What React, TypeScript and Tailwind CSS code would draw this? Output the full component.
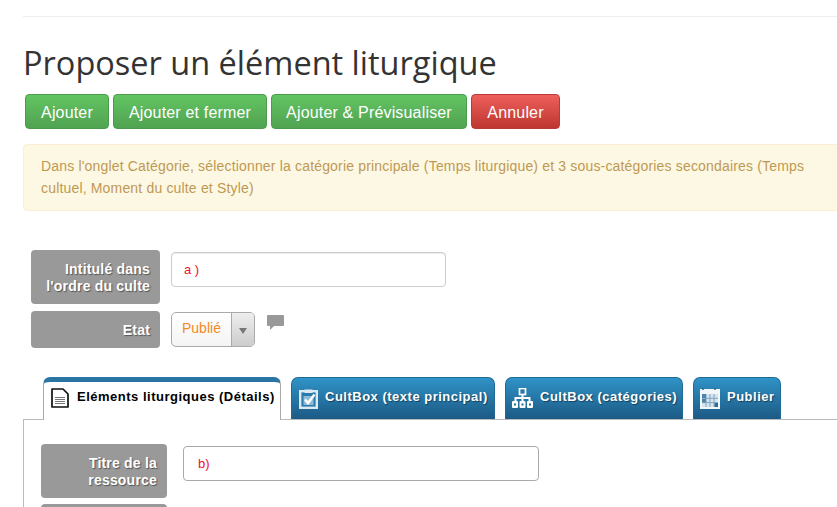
import type { ReactNode } from "react";

const arial = "font-['Liberation_Sans',Arial,sans-serif]";

function FormLabel({ children, className }: { children: ReactNode; className: string }) {
  return (
    <div
      className={`flex items-center justify-end rounded-[4px] bg-[#999999] pr-[10px] text-right text-[14px] leading-[17px] font-bold tracking-[0.2px] text-white [text-shadow:1px_1px_1px_#555] ${className}`}
    >
      <span className="pt-[1px]">{children}</span>
    </div>
  );
}

function DocIcon() {
  return (
    <svg width="18" height="20" viewBox="0 0 18 20" className="mt-[1px] shrink-0">
      <path d="M1 1h11l5 5v13H1z" fill="#fff" stroke="#111" strokeWidth="1.7" strokeLinejoin="round" />
      <path d="M4 9.5h10M4 11.5h10M4 13.5h10M4 15.5h10" stroke="#666" strokeWidth="0.9" />
    </svg>
  );
}

function ClipboardIcon() {
  return (
    <svg width="19" height="21" viewBox="0 0 19 21" className="shrink-0">
      <rect x="1.2" y="3.2" width="16.6" height="16.6" fill="#2a7bab" stroke="#dde9f1" strokeWidth="2.4" />
      <path d="M5.5 1.5h8v3.5h-8z" fill="#dde9f1" />
      <rect x="4.5" y="8" width="10" height="9" fill="#8fbbd6" />
      <path d="M6 11.5l3 3.5L15.5 6.5" fill="none" stroke="#fff" strokeWidth="2.4" />
    </svg>
  );
}

function TreeIcon() {
  return (
    <svg width="21" height="20" viewBox="0 0 21 20" className="shrink-0">
      <rect x="7.5" y="0.5" width="6" height="6" fill="#2a7bab" stroke="#fff" strokeWidth="1.7" />
      <path d="M10.5 6v8M3.5 14v-4h14v4" fill="none" stroke="#fff" strokeWidth="2" />
      <rect x="0" y="13" width="6" height="7" rx="1" fill="#fff" />
      <rect x="7.5" y="13" width="6" height="7" rx="1" fill="#fff" />
      <rect x="15" y="13" width="6" height="7" rx="1" fill="#fff" />
      <rect x="2" y="15.5" width="2" height="2" fill="#1f6795" />
      <rect x="9.5" y="15.5" width="2" height="2" fill="#1f6795" />
      <rect x="17" y="15.5" width="2" height="2" fill="#1f6795" />
    </svg>
  );
}

function CalendarIcon() {
  return (
    <svg width="20" height="21" viewBox="0 0 20 21" className="shrink-0">
      <rect x="0" y="1" width="20" height="20" fill="#f2f6f9" />
      <path d="M3 0v2M15 0v2" stroke="#1f5f8c" strokeWidth="1.4" />
      <rect x="2" y="6" width="16" height="13" fill="#d5e3ec" />
      <path d="M6 6v13M10 6v13M14 6v13M2 10.3h16M2 14.6h16" stroke="#7ea6c1" strokeWidth="1" />
      <rect x="2" y="6" width="4" height="4" fill="#4d86ad" />
      <rect x="2" y="10.8" width="4" height="3.6" fill="#4d86ad" />
      <rect x="14.5" y="15" width="3.5" height="4" fill="#2f6c99" />
    </svg>
  );
}

function BlueTab({ icon, label, className }: { icon: ReactNode; label: string; className: string }) {
  return (
    <div
      className={`flex h-[42px] items-start gap-[7px] rounded-t-[7px] border-t border-x border-[#206a96] bg-gradient-to-b from-[#3093c7] to-[#1c5a85] pt-[10px] text-[13px] leading-[18px] font-bold tracking-[0.5px] text-white [text-shadow:1px_1px_1px_#14405f] ${className}`}
    >
      {icon}
      <span className="whitespace-nowrap">{label}</span>
    </div>
  );
}

export default function App() {
  return (
    <div className={`h-[507px] w-[837px] overflow-hidden bg-white pl-[23px] ${arial}`}>
      <div className="mt-[16px] h-px w-[900px] bg-[#eeeeee]" />

      <h1 className="mt-[24px] h-[49px] font-['Open_Sans',sans-serif] text-[32.5px] leading-[44px] font-normal text-[#333333]">
        Proposer un élément liturgique
      </h1>

      <div className="mt-[4px] ml-[2px] flex gap-[4px] text-[16px] tracking-[0.17px] text-white [text-shadow:0_1px_1px_#3a6a3a]">
        <button className="h-[35px] w-[84px] rounded-[4px] border border-[#4a9c4c] bg-gradient-to-b from-[#62c462] to-[#51a351] pt-[2px]">
          Ajouter
        </button>
        <button className="h-[35px] w-[154px] rounded-[4px] border border-[#4a9c4c] bg-gradient-to-b from-[#62c462] to-[#51a351] pt-[2px]">
          Ajouter et fermer
        </button>
        <button className="h-[35px] w-[196px] rounded-[4px] border border-[#4a9c4c] bg-gradient-to-b from-[#62c462] to-[#51a351] pt-[2px]">
          Ajouter &amp; Prévisualiser
        </button>
        <button className="h-[35px] w-[89px] rounded-[4px] border border-[#b93a36] bg-gradient-to-b from-[#ee5f5b] to-[#bd362f] pt-[2px]">
          Annuler
        </button>
      </div>

      <div className="mt-[15px] h-[67px] w-[900px] rounded-[4px] border border-[#fbeed5] bg-[#fcf8e3] pt-[10px] pl-[17px] text-[14px] leading-[22px] tracking-[0.17px] text-[#c09853]">
        <p className="w-[780px]">
          Dans l'onglet Catégorie, sélectionner la catégorie principale (Temps liturgique) et 3 sous-catégories
          secondaires (Temps cultuel, Moment du culte et Style)
        </p>
      </div>

      <div className="mt-[39px] ml-[8px] flex items-start gap-[11px]">
        <FormLabel className="h-[54px] w-[129px]">
          Intitulé dans
          <br />
          l'ordre du culte
        </FormLabel>
        <div className="mt-[2px] flex h-[35px] w-[275px] items-center rounded-[4px] border border-[#cccccc] pl-[12px] text-[13px] text-[#ee1030] shadow-[inset_0_1px_1px_rgba(0,0,0,0.075)]">
          a )
        </div>
      </div>

      <div className="mt-[7px] ml-[8px] flex items-start gap-[11px]">
        <FormLabel className="h-[37px] w-[129px]">Etat</FormLabel>
        <div className="mt-[1px] flex h-[35px] w-[84px] overflow-hidden rounded-[5px] border border-[#aaaaaa] bg-gradient-to-b from-white to-[#f4f4f4]">
          <div className="flex w-[59px] items-center pb-[2px] pl-[10px] text-[14px] text-[#f58a1f]">Publié</div>
          <div className="flex flex-1 items-center justify-center border-l border-[#aaaaaa] bg-gradient-to-b from-[#eeeeee] to-[#cccccc]">
            <div className="mt-[2px] h-0 w-0 border-x-[4px] border-t-[6px] border-x-transparent border-t-[#777777]" />
          </div>
        </div>
        <svg width="17" height="15" viewBox="0 0 17 15" className="mt-[4px] ml-[1px]">
          <path d="M1 0h15a1 1 0 0 1 1 1v9a1 1 0 0 1-1 1H7l-4 4v-4H1a1 1 0 0 1-1-1V1a1 1 0 0 1 1-1z" fill="#999999" />
        </svg>
      </div>

      <div className="relative mt-[29px] ml-[20px] flex h-[42px] w-[800px] gap-[10px]">
        <div className="relative z-10 flex h-[43px] w-[238px] items-start gap-[8px] rounded-t-[7px] border-x border-t-[5px] border-x-[#aaaaaa] border-t-[#2a75a3] bg-white pt-[5px] pl-[7px] text-[13px] leading-[18px] font-bold tracking-[0.5px] text-black">
          <DocIcon />
          <span className="mt-[1px] whitespace-nowrap">Eléments liturgiques (Détails)</span>
        </div>
        <BlueTab icon={<ClipboardIcon />} label="CultBox (texte principal)" className="w-[204px] pl-[7px]" />
        <BlueTab icon={<TreeIcon />} label="CultBox (catégories)" className="w-[178px] pl-[6px]" />
        <BlueTab icon={<CalendarIcon />} label="Publier" className="w-[88px] pl-[6px]" />
      </div>

      <div className="h-[100px] w-[900px] border-t border-l border-[#bbbbbb] pt-[24px] pl-[17px]">
        <div className="flex items-start gap-[16px]">
          <FormLabel className="h-[54px] w-[126px]">
            Titre de la
            <br />
            ressource
          </FormLabel>
          <div className="mt-[2px] flex h-[35px] w-[356px] items-center rounded-[4px] border border-[#aaaaaa] pl-[14px] text-[13px] text-[#ee1030]">
            b)
          </div>
        </div>
        <div className="mt-[6px] h-[30px] w-[126px] rounded-[4px] bg-[#999999]" />
      </div>
    </div>
  );
}
